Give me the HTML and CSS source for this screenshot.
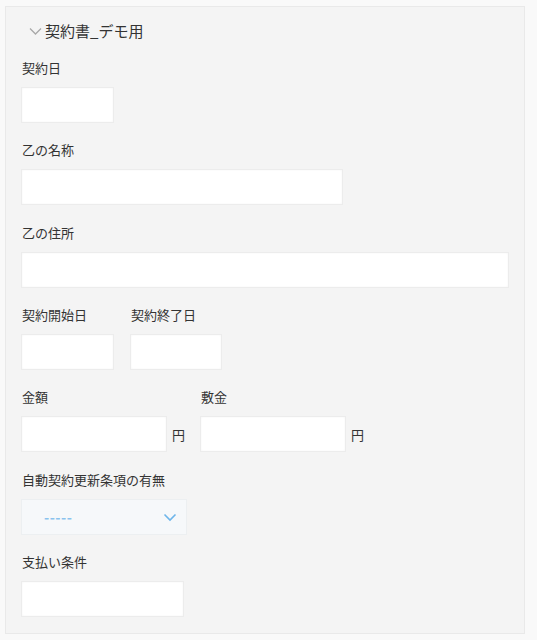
FILE: index.html
```html
<!DOCTYPE html>
<html lang="ja">
<head>
<meta charset="utf-8">
<link rel="stylesheet" href="styles.css">
</head>
<body>
<div class="panel">
  <div class="group-head">
    <svg class="chev" width="13" height="9" viewBox="0 0 13 9"><path d="M1 1.5 L6.5 7 L12 1.5" fill="none" stroke="#a8a8a8" stroke-width="1.3"/></svg>
    <span class="group-title">契約書_デモ用</span>
  </div>

  <div class="field">
    <div class="label">契約日</div>
    <div class="input w93"></div>
  </div>

  <div class="field">
    <div class="label">乙の名称</div>
    <div class="input w322"></div>
  </div>

  <div class="field">
    <div class="label">乙の住所</div>
    <div class="input w488"></div>
  </div>

  <div class="row">
    <div class="field">
      <div class="label">契約開始日</div>
      <div class="input w93"></div>
    </div>
    <div class="field">
      <div class="label">契約終了日</div>
      <div class="input w92"></div>
    </div>
  </div>

  <div class="row row-money">
    <div class="field">
      <div class="label">金額</div>
      <div class="unit-wrap"><div class="input w146"></div><span class="unit">円</span></div>
    </div>
    <div class="field">
      <div class="label">敷金</div>
      <div class="unit-wrap"><div class="input w146"></div><span class="unit">円</span></div>
    </div>
  </div>

  <div class="field">
    <div class="label">自動契約更新条項の有無</div>
    <div class="select">
      <span class="select-val">-----</span>
      <svg class="select-chev" width="14" height="9" viewBox="0 0 14 9"><path d="M1.5 1.5 L7 7 L12.5 1.5" fill="none" stroke="#6db5ea" stroke-width="1.6"/></svg>
    </div>
  </div>

  <div class="field last">
    <div class="label">支払い条件</div>
    <div class="input w163"></div>
  </div>
</div>
</body>
</html>
```

FILE: styles.css
```css
html, body {
  margin: 0;
  padding: 0;
  background: #f9f9f9;
}
body {
  padding: 6px 12px 0 5px;
  font-family: "Noto Sans CJK JP", "Noto Sans", sans-serif;
  color: #333;
}
.panel {
  width: 520px;
  height: 628px;
  box-sizing: border-box;
  background: #f4f4f4;
  border: 1px solid #e9e9e9;
  padding: 10px 15px 0 15px;
}
.group-head {
  display: flex;
  align-items: center;
  height: 28px;
  padding-left: 8px;
  margin-bottom: 13px;
}
.chev {
  margin-right: 3px;
  margin-top: 1px;
}
.group-title {
  font-size: 15px;
  line-height: 28px;
  color: #333;
}
.field {
  margin-bottom: 17.33px;
}
.field.last {
  margin-bottom: 0;
}
.label {
  font-size: 13px;
  line-height: 20px;
  height: 20px;
  padding-left: 1px;
  margin-bottom: 9px;
  color: #333;
}
.input {
  height: 36px;
  box-sizing: border-box;
  background: #fff;
  border: 1px solid #ececec;
  box-shadow: inset 0 0 2px rgba(0,0,0,0.06);
}
.w93 { width: 93px; }
.w92 { width: 92px; }
.w146 { width: 146px; }
.w163 { width: 163px; }
.w322 { width: 322px; }
.w488 { width: 488px; }
.row {
  display: flex;
  gap: 16px;
}
.row-money {
  gap: 15px;
}
.unit-wrap {
  display: flex;
  align-items: center;
}
.unit {
  font-size: 13px;
  margin-left: 5px;
  color: #333;
}
.select {
  width: 166px;
  height: 36px;
  box-sizing: border-box;
  background: #f6f8fa;
  border: 1px solid #eceff1;
  display: flex;
  align-items: center;
  justify-content: space-between;
  padding: 0 9px 0 22px;
}
.select-val {
  font-size: 14px;
  font-weight: bold;
  color: #8ac3ee;
  letter-spacing: 0.5px;
}
.select-chev {
  margin-top: 1px;
}
```
